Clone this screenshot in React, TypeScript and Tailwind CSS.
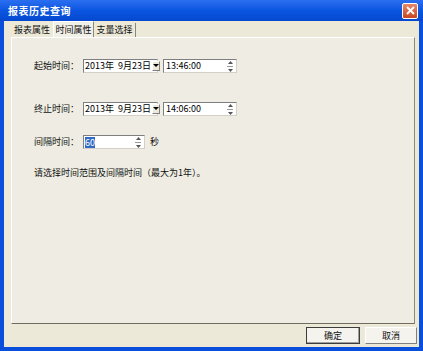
import React from "react";

const font = { fontFamily: '"Noto Sans CJK SC", "Liberation Sans", sans-serif' };

function DateBox({ value }: { value: string }) {
  return (
    <div className="flex h-[14px] w-[75px] items-stretch border border-t-[#7f7f7f] border-l-[#7f7f7f] border-r-[#d4d0c8] border-b-[#d4d0c8] bg-white">
      <div className="flex-1 pl-[1px] text-[9px] leading-[12px] text-black whitespace-pre">{value}</div>
      <div className="m-[1px] flex w-[11px] items-center justify-center bg-[#ece9d8] border border-t-white border-l-white border-r-[#7f7f7f] border-b-[#7f7f7f]">
        <svg width="6" height="4" viewBox="0 0 6 4"><path d="M0 0h6L3 3z" fill="#000" /></svg>
      </div>
    </div>
  );
}

function Spin() {
  return (
    <div className="flex w-[11px] flex-col justify-center items-center gap-[2px] pr-[1px]">
      <svg width="5" height="3" viewBox="0 0 5 3"><path d="M2.5 0L5 3H0z" fill="#555" /></svg>
      <div className="h-px w-[6px] bg-[#999]" />
      <svg width="5" height="3" viewBox="0 0 5 3"><path d="M0 0h5L2.5 3z" fill="#555" /></svg>
    </div>
  );
}

function TimeBox({ value }: { value: string }) {
  return (
    <div className="flex h-[14px] w-[74px] items-stretch border border-t-[#7f7f7f] border-l-[#7f7f7f] border-r-[#d4d0c8] border-b-[#d4d0c8] bg-white">
      <div className="flex-1 pl-[2px] text-[9px] leading-[12px] text-black">{value}</div>
      <Spin />
    </div>
  );
}

function Row({ label, date, time }: { label: string; date: string; time: string }) {
  return (
    <div className="flex items-center">
      <span className="w-[49px] text-[9px] text-[#111]">{label}</span>
      <DateBox value={date} />
      <div className="w-[5px]" />
      <TimeBox value={time} />
    </div>
  );
}

export default function App() {
  return (
    <div className="flex h-[351px] w-[423px] flex-col bg-[#0a4fdc]" style={font}>
      <div className="flex h-[21px] items-center justify-between bg-gradient-to-b from-[#2a6ff0] via-[#0a55e0] to-[#0648d0] pl-[8px] pr-[5px]">
        <span className="text-[10px] font-bold text-white tracking-[0.5px]">报表历史查询</span>
        <div className="flex h-[16px] w-[16px] items-center justify-center rounded-[2px] border border-white bg-gradient-to-b from-[#e8866a] to-[#c8461f]">
          <svg width="9" height="9" viewBox="0 0 9 9"><path d="M1 1l7 7M8 1L1 8" stroke="#fff" strokeWidth="1.8" /></svg>
        </div>
      </div>
      <div className="mx-[4px] mb-[4px] flex flex-1 flex-col bg-[#ece9d8]">
        <div className="flex h-[16px] items-end pl-[7px] pt-[1px] text-[9px] text-[#111]">
          <div className="flex h-[14px] w-[42px] items-center justify-center">报表属性</div>
          <div className="relative z-10 flex h-[16px] w-[41px] items-center justify-center border border-b-0 border-t-white border-l-white border-r-[#8a8878] bg-[#f0efe8]">时间属性</div>
          <div className="flex h-[14px] w-[42px] items-center justify-center border-r border-[#8a8878]">支量选择</div>
        </div>
        <div className="ml-[7px] mr-[4px] flex h-[287px] flex-col border border-t-white border-l-white border-r-[#8a8878] border-b-[#6f6d60] bg-[#efede3] pl-[22px] pt-[21px]">
          <Row label="起始时间：" date="2013年  9月23日" time="13:46:00" />
          <div className="h-[29px]" />
          <Row label="终止时间：" date="2013年  9月23日" time="14:06:00" />
          <div className="h-[19px]" />
          <div className="flex items-center">
            <span className="w-[49px] text-[9px] text-[#111]">间隔时间：</span>
            <div className="flex h-[14px] w-[62px] items-stretch border border-t-[#7f7f7f] border-l-[#7f7f7f] border-r-[#d4d0c8] border-b-[#d4d0c8] bg-white">
              <div className="flex flex-1 items-center pl-[1px] text-[9px] leading-[11px]">
                <span className="bg-[#316ac5] text-white">60</span>
              </div>
              <Spin />
            </div>
            <span className="ml-[5px] text-[9px] text-[#111]">秒</span>
          </div>
          <div className="h-[17px]" />
          <div className="text-[9px] text-[#111]">请选择时间范围及间隔时间（最大为1年）。</div>
        </div>
        <div className="flex justify-end gap-[5px] pr-[2px] pt-[3px]">
          <div className="flex h-[17px] w-[54px] items-center justify-center border border-[#3c3c3c] bg-[#f4f3ee] text-[9px] text-[#111] shadow-[inset_-1px_-1px_0_#a0a0a0]">确定</div>
          <div className="flex h-[17px] w-[52px] items-center justify-center border border-t-white border-l-white border-r-[#7f7f7f] border-b-[#7f7f7f] bg-[#f4f3ee] text-[9px] text-[#111]">取消</div>
        </div>
      </div>
    </div>
  );
}
